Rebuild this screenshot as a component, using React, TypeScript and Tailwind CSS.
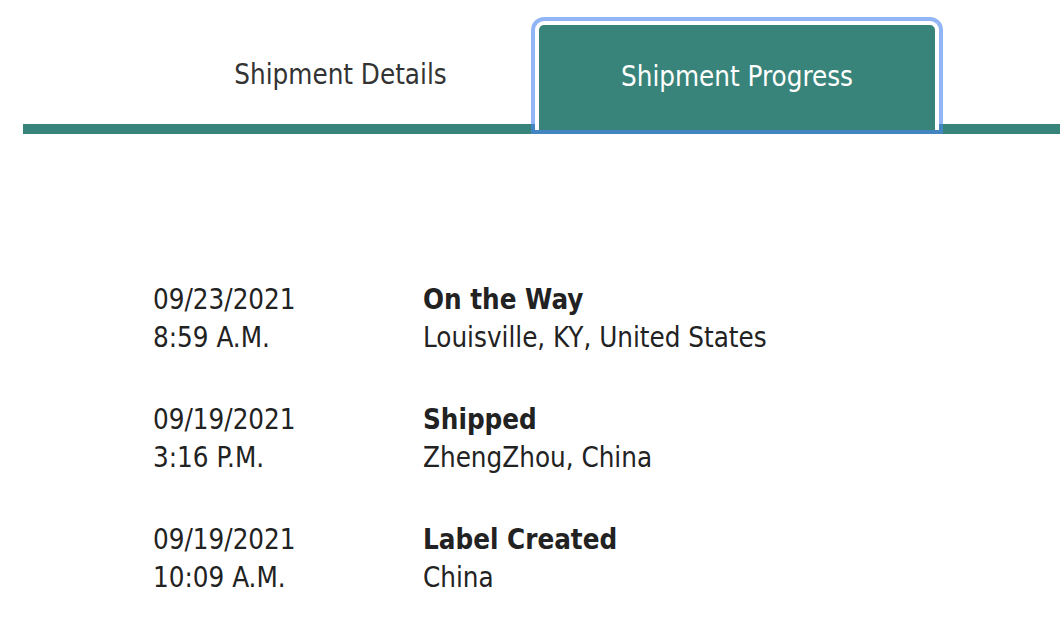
import React from 'react';

const events = [
  { date: '09/23/2021', time: '8:59 A.M.', status: 'On the Way', place: 'Louisville, KY, United States' },
  { date: '09/19/2021', time: '3:16 P.M.', status: 'Shipped', place: 'ZhengZhou, China' },
  { date: '09/19/2021', time: '10:09 A.M.', status: 'Label Created', place: 'China' },
];

const font = { fontFamily: '"DejaVu Sans Condensed", "DejaVu Sans", sans-serif' };

export default function App() {
  return (
    <div className="w-[1060px] h-[644px] bg-white overflow-hidden" style={font}>
      <div className="pl-[23px] pt-[21px]">
        {/* tab bar */}
        <div className="flex border-b-[10px] border-[#38847a] pl-[115px] w-[1100px]">
          <button className="w-[397px] h-[103px] flex items-center justify-center pt-[5px] pl-[8px] text-[27.5px] text-[#333333]">
            Shipment Details
          </button>
          <button className="relative z-10 w-[404px] h-[109px] -mb-[6px] flex items-center justify-center pb-[2px] bg-[#38847a] border-[4px] border-b-0 border-white rounded-t-[9px] ring-4 ring-[#4a86ee]/60 text-[27.5px] text-white">
            Shipment Progress
          </button>
        </div>
      </div>

      {/* timeline */}
      <div className="pl-[153px] pt-[146px] flex flex-col gap-[44px] text-[27.5px] leading-[38px] text-[#222222]">
        {events.map((e, i) => (
          <div key={i} className="flex">
            <div className="w-[270px]">
              <div>{e.date}</div>
              <div>{e.time}</div>
            </div>
            <div>
              <div className="font-bold">{e.status}</div>
              <div>{e.place}</div>
            </div>
          </div>
        ))}
      </div>
    </div>
  );
}
